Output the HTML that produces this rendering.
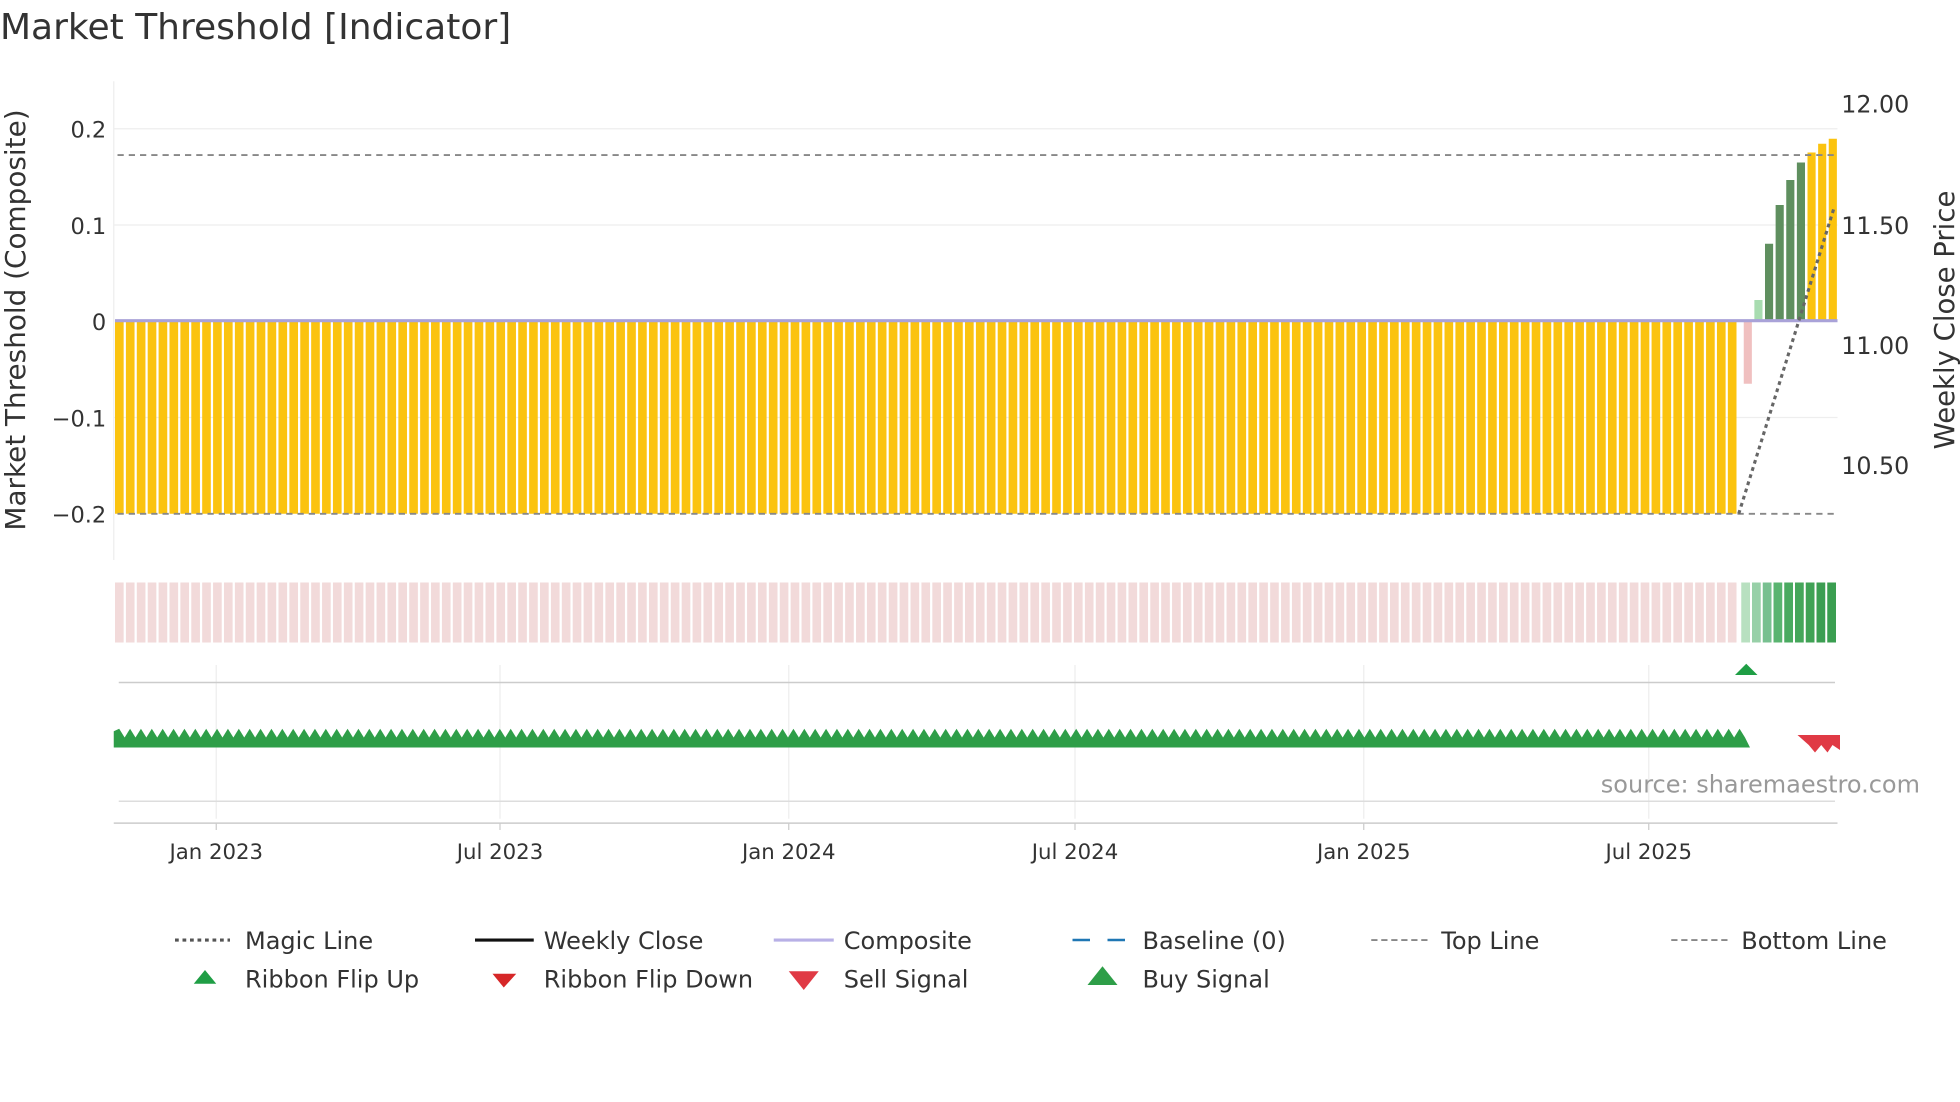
<!DOCTYPE html>
<html><head><meta charset="utf-8"><style>
html,body{margin:0;padding:0;background:#fff;width:1960px;height:1102px;overflow:hidden}
svg{display:block;font-family:"DejaVu Sans","Liberation Sans",sans-serif}
</style></head><body>
<svg id="s" width="1960" height="1102" viewBox="0 0 1568 881.6" xmlns="http://www.w3.org/2000/svg">
<rect width="1568" height="882" fill="#fff"/>
<text x="0" y="31" font-size="28.8" fill="#333">Market Threshold [Indicator]</text>
<line x1="91" y1="65" x2="91" y2="448" stroke="#eee" stroke-width="1"/>
<g stroke="#eee" stroke-width="1">
<line x1="91" y1="103" x2="1470" y2="103"/><line x1="91" y1="180" x2="1470" y2="180"/>
<line x1="91" y1="334" x2="1470" y2="334"/>
</g>
<g font-size="18" fill="#333" text-anchor="end">
<text x="85" y="110">0.2</text><text x="85" y="187">0.1</text><text x="85" y="264">0</text>
<text x="85" y="341">−0.1</text><text x="85" y="418">−0.2</text>
</g>
<g font-size="19" fill="#333">
<text x="1473" y="90">12.00</text><text x="1473" y="187">11.50</text><text x="1473" y="283">11.00</text><text x="1473" y="379">10.50</text>
</g>
<text transform="translate(20,256) rotate(-90)" font-size="22.3" fill="#333" text-anchor="middle">Market Threshold (Composite)</text>
<text transform="translate(1563,256) rotate(-90)" font-size="22" fill="#333" text-anchor="middle">Weekly Close Price</text>
<g id="bars"></g>
<line x1="94" y1="124" x2="1468" y2="124" stroke="#888" stroke-width="1.5" stroke-dasharray="5,4"/>
<line x1="94" y1="411" x2="1468" y2="411" stroke="#888" stroke-width="1.5" stroke-dasharray="5,4"/>
<line x1="92" y1="256.5" x2="1470" y2="256.5" stroke="#a9a2d8" stroke-width="2.5"/>
<line x1="1391" y1="411" x2="1467" y2="167" stroke="#666" stroke-width="2.5" stroke-dasharray="3,3"/>
<g id="rib"></g>
<g stroke="#eee"><line x1="173" y1="532" x2="173" y2="655"/><line x1="400" y1="532" x2="400" y2="655"/><line x1="631" y1="532" x2="631" y2="655"/><line x1="860" y1="532" x2="860" y2="655"/><line x1="1091" y1="532" x2="1091" y2="655"/><line x1="1319" y1="532" x2="1319" y2="655"/></g>
<line x1="95" y1="546" x2="1468" y2="546" stroke="#ccc" stroke-width="1.2"/>
<polygon points="1388,540 1397,531 1406,540" fill="#1f9e45"/>
<g id="tri"></g>
<polygon points="1438,588 1472,588 1472,600 1466,596 1462,602 1457,596 1452,602 1447,596" fill="#e03a45"/>
<line x1="95" y1="641" x2="1468" y2="641" stroke="#ddd" stroke-width="1.2"/>
<text x="1536" y="634" font-size="19.2" fill="#999" text-anchor="end">source: sharemaestro.com</text>
<line x1="91" y1="658.5" x2="1470" y2="658.5" stroke="#ccc" stroke-width="1.2"/>
<g stroke="#ccc"><line x1="173" y1="658" x2="173" y2="664"/><line x1="400" y1="658" x2="400" y2="664"/><line x1="631" y1="658" x2="631" y2="664"/><line x1="860" y1="658" x2="860" y2="664"/><line x1="1091" y1="658" x2="1091" y2="664"/><line x1="1319" y1="658" x2="1319" y2="664"/></g>
<g font-size="17" fill="#333" text-anchor="middle">
<text x="173" y="687">Jan 2023</text><text x="400" y="687">Jul 2023</text><text x="631" y="687">Jan 2024</text>
<text x="860" y="687">Jul 2024</text><text x="1091" y="687">Jan 2025</text><text x="1319" y="687">Jul 2025</text>
</g>
<g font-size="19.2" fill="#333">
<line x1="140" y1="752" x2="184" y2="752" stroke="#555" stroke-width="2.5" stroke-dasharray="3,3"/><text x="196" y="759">Magic Line</text>
<line x1="380" y1="752" x2="427" y2="752" stroke="#111" stroke-width="2.5"/><text x="435" y="759">Weekly Close</text>
<line x1="619" y1="752" x2="667" y2="752" stroke="#b8b0e6" stroke-width="2.5"/><text x="675" y="759">Composite</text>
<line x1="858" y1="752" x2="904" y2="752" stroke="#1f77b4" stroke-width="2" stroke-dasharray="14,14"/><text x="914" y="759">Baseline (0)</text>
<line x1="1097" y1="752" x2="1143" y2="752" stroke="#888" stroke-width="1.5" stroke-dasharray="5,3"/><text x="1153" y="759">Top Line</text>
<line x1="1337" y1="752" x2="1383" y2="752" stroke="#888" stroke-width="1.5" stroke-dasharray="5,3"/><text x="1393" y="759">Bottom Line</text>
<polygon points="155,787 164,776 173,787" fill="#1f9e45"/><text x="196" y="790">Ribbon Flip Up</text>
<polygon points="394,779 413,779 403,790" fill="#d62728"/><text x="435" y="790">Ribbon Flip Down</text>
<polygon points="631,777 655,777 643,792" fill="#e03a45"/><text x="675" y="790">Sell Signal</text>
<polygon points="870,788 882,773 894,788" fill="#2e9e48"/><text x="914" y="790">Buy Signal</text>
</g>
</svg>
<script>
var NS="http://www.w3.org/2000/svg";
function r(g,x,y,w,h,f){var e=document.createElementNS(NS,"rect");e.setAttribute("x",x);e.setAttribute("y",y);e.setAttribute("width",w);e.setAttribute("height",h);e.setAttribute("fill",f);document.getElementById(g).appendChild(e);}
var step=(1391-92)/149;
for(var i=0;i<149;i++){r("bars",92+i*step,257,step-1.8,154,"#fbc30f");r("rib",92+i*step,466,step-1.8,48,"#f2dada");}
var tail=[[1395,257,50,"#f0c0c0"],[1403.5,240,17,"#a8dcb0"],[1412,195,62,"#5f8f5f"],[1420.5,164,93,"#5f8f5f"],[1429,144,113,"#5f8f5f"],[1437.5,130,127,"#5f8f5f"],[1446,122,135,"#fbc30f"],[1454.5,115,142,"#fbc30f"],[1463,111,146,"#fbc30f"]];
tail.forEach(function(t){r("bars",t[0],t[1],6.5,t[2],t[3]);});
var rc=["#b8e0c0","#98d0a8","#78c090","#5ab470","#4aaa60","#45a65a","#40a255","#3c9e52","#3a9e50"];
for(var j=0;j<9;j++)r("rib",1393+j*8.6,466,7,48,rc[j]);
var g=document.getElementById("tri");
var pts="91,598 91,585 ";var n=Math.round((1392-91)/8.7);
for(var k=0;k<n;k++){var x=91+k*8.7;pts+=(x+4.35)+",583 "+(x+8.7)+",590 ";}
pts+="1400,598";
var p=document.createElementNS(NS,"polygon");p.setAttribute("points",pts);p.setAttribute("fill","#2e9e48");g.appendChild(p);
</script>
</body></html>
